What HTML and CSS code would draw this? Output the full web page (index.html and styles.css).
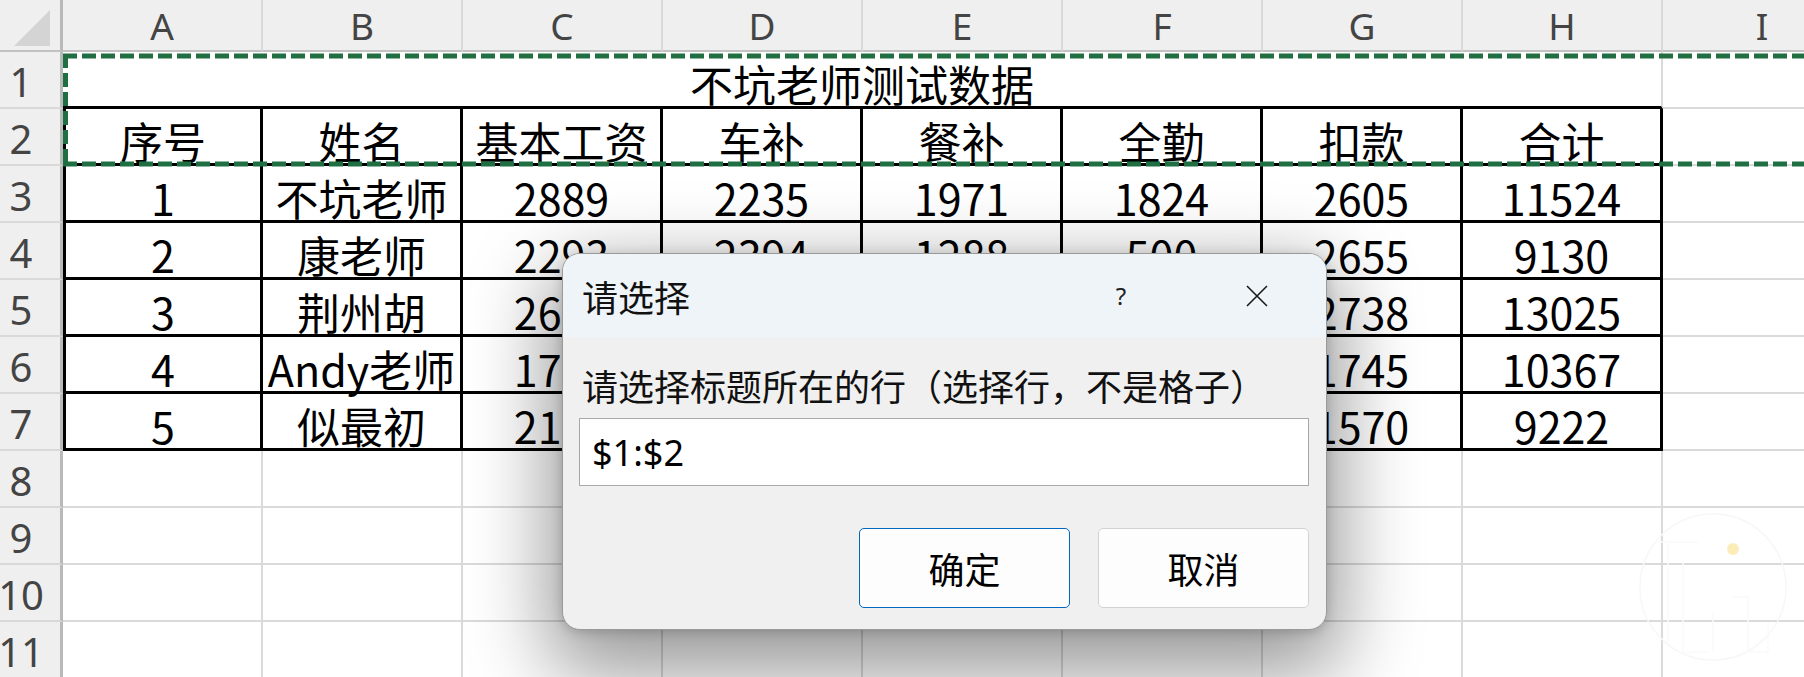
FILE: index.html
```html
<!DOCTYPE html>
<html lang="zh-CN">
<head>
<meta charset="utf-8">
<title>Excel</title>
<link rel="stylesheet" href="styles.css">
</head>
<body>
<div class="sheet">
  <div class="corner"><svg class="corner-tri" width="60" height="50" viewBox="0 0 60 50"><polygon points="14,46 50,46 50,10" fill="#d4d4d4"/></svg></div>
  <div class="colhead">A</div><div class="colhead">B</div><div class="colhead">C</div><div class="colhead">D</div><div class="colhead">E</div><div class="colhead">F</div><div class="colhead">G</div><div class="colhead">H</div><div class="colhead">I</div>

  <div class="rowhead">1</div>
  <div class="cell title">不坑老师测试数据</div>
  <div class="cell"></div>

  <div class="rowhead">2</div>
  <div class="cell t a">序号</div><div class="cell t">姓名</div><div class="cell t">基本工资</div><div class="cell t">车补</div><div class="cell t">餐补</div><div class="cell t">全勤</div><div class="cell t">扣款</div><div class="cell t">合计</div>
  <div class="cell"></div>

  <div class="rowhead">3</div>
  <div class="cell t a">1</div><div class="cell t">不坑老师</div><div class="cell t">2889</div><div class="cell t">2235</div><div class="cell t">1971</div><div class="cell t">1824</div><div class="cell t">2605</div><div class="cell t">11524</div>
  <div class="cell"></div>

  <div class="rowhead">4</div>
  <div class="cell t a">2</div><div class="cell t">康老师</div><div class="cell t">2293</div><div class="cell t">2394</div><div class="cell t">1288</div><div class="cell t">500</div><div class="cell t">2655</div><div class="cell t">9130</div>
  <div class="cell"></div>

  <div class="rowhead">5</div>
  <div class="cell t a">3</div><div class="cell t">荆州胡</div><div class="cell t">2680</div><div class="cell t">2465</div><div class="cell t">2352</div><div class="cell t">2790</div><div class="cell t">2738</div><div class="cell t">13025</div>
  <div class="cell"></div>

  <div class="rowhead">6</div>
  <div class="cell t a">4</div><div class="cell t">Andy老师</div><div class="cell t">1790</div><div class="cell t">2103</div><div class="cell t">2388</div><div class="cell t">2341</div><div class="cell t">1745</div><div class="cell t">10367</div>
  <div class="cell"></div>

  <div class="rowhead">7</div>
  <div class="cell t a">5</div><div class="cell t">似最初</div><div class="cell t">2130</div><div class="cell t">1852</div><div class="cell t">1760</div><div class="cell t">1910</div><div class="cell t">1570</div><div class="cell t">9222</div>
  <div class="cell"></div>

  <div class="rowhead">8</div>
  <div class="cell"></div><div class="cell"></div><div class="cell"></div><div class="cell"></div><div class="cell"></div><div class="cell"></div><div class="cell"></div><div class="cell"></div><div class="cell"></div>

  <div class="rowhead">9</div>
  <div class="cell"></div><div class="cell"></div><div class="cell"></div><div class="cell"></div><div class="cell"></div><div class="cell"></div><div class="cell"></div><div class="cell"></div><div class="cell"></div>

  <div class="rowhead">10</div>
  <div class="cell"></div><div class="cell"></div><div class="cell"></div><div class="cell"></div><div class="cell"></div><div class="cell"></div><div class="cell"></div><div class="cell"></div><div class="cell"></div>

  <div class="rowhead">11</div>
  <div class="cell"></div><div class="cell"></div><div class="cell"></div><div class="cell"></div><div class="cell"></div><div class="cell"></div><div class="cell"></div><div class="cell"></div><div class="cell"></div>
</div>

<svg class="marquee" width="1804" height="677" viewBox="0 0 1804 677">
  <g stroke="#1f6f43" stroke-width="5" fill="none" stroke-dasharray="14 5">
    <line x1="63" y1="56" x2="1804" y2="56"/>
    <line x1="63" y1="164" x2="1804" y2="164"/>
    <line x1="65.5" y1="54" x2="65.5" y2="166"/>
  </g>
</svg>

<svg class="watermark" width="170" height="170" viewBox="0 0 170 170">
  <circle cx="85" cy="85" r="73" fill="none" stroke="#f7f7f7" stroke-width="1.5"/>
  <path d="M30 40 H70 M40 40 V140 M55 60 V150 H80 M85 110 V150 M105 95 H120 V150 M120 150 H140 M140 120 V150" fill="none" stroke="#fafafa" stroke-width="1.5"/>
  <circle cx="105" cy="47" r="6" fill="#fcedb8"/>
</svg>

<div class="dialog">
  <div class="dlg-title">
    <span class="dlg-caption">请选择</span>
    <span class="dlg-help">?</span>
    <span class="dlg-close"><svg width="22" height="22" viewBox="0 0 22 22"><path d="M1 1 L21 21 M21 1 L1 21" stroke="#1a1a1a" stroke-width="1.6" fill="none"/></svg></span>
  </div>
  <div class="dlg-body">
    <div class="dlg-label">请选择标题所在的行（选择行，不是格子）</div>
    <div class="dlg-input">$1:$2</div>
    <div class="dlg-buttons">
      <div class="btn btn-ok">确定</div>
      <div class="btn">取消</div>
    </div>
  </div>
</div>
</body>
</html>
```

FILE: styles.css
```css
html, body {
  margin: 0;
  padding: 0;
  background: #ffffff;
  overflow: hidden;
}

body {
  width: 1804px;
  height: 677px;
  position: relative;
  font-family: "Noto Sans CJK SC", "Noto Sans", sans-serif;
  color: #000;
}

.sheet {
  display: grid;
  grid-template-columns: 63px repeat(9, 200px);
  grid-template-rows: 52px repeat(11, 57px);
}

.sheet > div {
  box-sizing: border-box;
}

.corner {
  background: #efefef;
  border-right: 3px solid #b9b9b9;
  border-bottom: 2px solid #c2c2c2;
  overflow: hidden;
}

.corner-tri {
  display: block;
}

.colhead {
  background: #efefef;
  border-right: 2px solid #d9d9d9;
  border-bottom: 2px solid #c2c2c2;
  font-family: "Noto Sans", sans-serif;
  font-size: 37px;
  color: #444;
  display: flex;
  align-items: center;
  justify-content: center;
}

.rowhead {
  background: #efefef;
  border-right: 3px solid #b9b9b9;
  border-bottom: 2px solid #d9d9d9;
  font-family: "Noto Sans", sans-serif;
  font-size: 40px;
  color: #444;
  display: flex;
  align-items: center;
  justify-content: center;
  padding-right: 18px;
  padding-top: 3px;
}

.cell {
  border-right: 2px solid #dadada;
  border-bottom: 2px solid #dadada;
  display: flex;
  align-items: flex-end;
  justify-content: center;
  font-size: 43px;
  line-height: 1;
  padding-bottom: 1px;
  white-space: nowrap;
}

.title {
  grid-column: span 8;
  border-bottom: 3px solid #000;
}

.t {
  border-right: 3px solid #000;
  border-bottom: 3px solid #000;
}

.a {
  border-left: 3px solid #000;
}

.marquee {
  position: absolute;
  left: 0;
  top: 0;
  pointer-events: none;
}

.watermark {
  position: absolute;
  left: 1628px;
  top: 502px;
}

.dialog {
  position: absolute;
  left: 562px;
  top: 253px;
  width: 765px;
  height: 377px;
  box-sizing: border-box;
  border: 1px solid #9a9a9a;
  border-radius: 18px;
  overflow: hidden;
  background: #f0f0f0;
  box-shadow: 0 30px 80px 14px rgba(0, 0, 0, 0.4), 0 2px 12px rgba(0, 0, 0, 0.18);
}

.dlg-title {
  height: 83px;
  background: #eef4f8;
  display: flex;
  align-items: center;
  padding-left: 19px;
}

.dlg-caption {
  flex: 1;
  font-size: 36px;
  line-height: 1;
  color: #111;
}

.dlg-help {
  width: 60px;
  text-align: center;
  font-family: "Noto Sans", sans-serif;
  font-size: 24px;
  color: #222;
  margin-right: 76px;
}

.dlg-close {
  width: 60px;
  height: 40px;
  display: flex;
  align-items: center;
  justify-content: center;
  margin-right: 39px;
}

.dlg-body {
  padding: 0 17px 0 16px;
}

.dlg-label {
  margin-top: 30px;
  padding-left: 3px;
  font-size: 36px;
  line-height: 36px;
  white-space: nowrap;
  color: #111;
}

.dlg-input {
  margin-top: 15px;
  height: 68px;
  box-sizing: border-box;
  border: 1px solid #a8a8a8;
  background: #fff;
  display: flex;
  align-items: center;
  padding-left: 12px;
  font-family: "Noto Sans", sans-serif;
  font-size: 36px;
  color: #000;
}

.dlg-buttons {
  margin-top: 42px;
  display: flex;
  justify-content: flex-end;
  gap: 28px;
}

.btn {
  width: 211px;
  height: 80px;
  box-sizing: border-box;
  border: 1px solid #d3d3d3;
  border-radius: 5px;
  background: #fdfdfd;
  display: flex;
  align-items: center;
  justify-content: center;
  font-size: 36px;
  line-height: 1;
  color: #000;
}

.btn-ok {
  border-color: #0067c0;
}
```
